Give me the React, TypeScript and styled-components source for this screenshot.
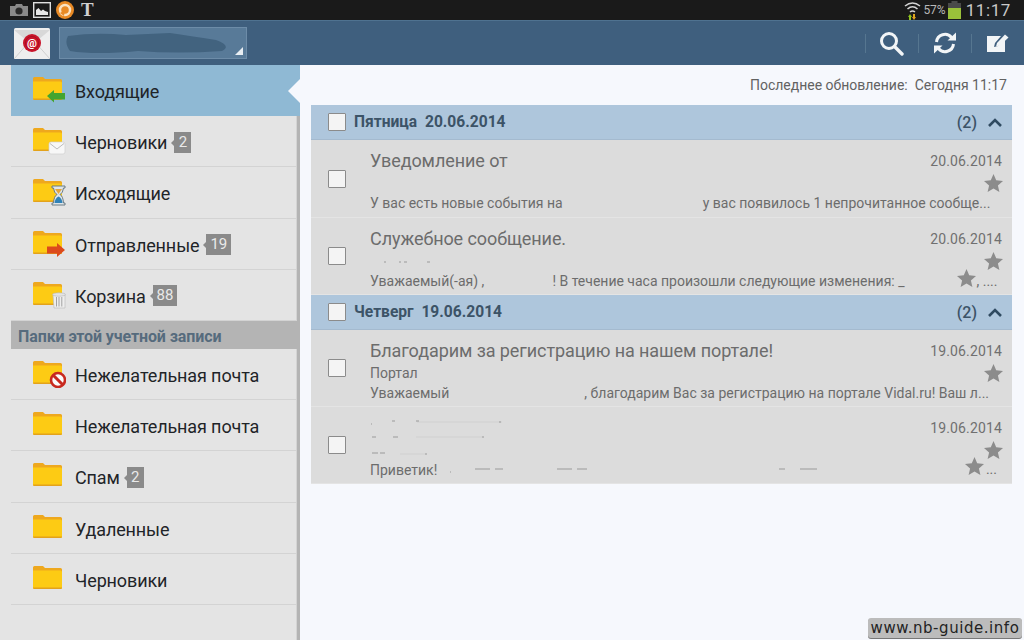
import React from 'react'
import styled, { createGlobalStyle } from 'styled-components'

const GlobalStyle = createGlobalStyle`
  html, body { margin: 0; padding: 0; background: #f6f8fd; }
  * { box-sizing: border-box; }
`

const Page = styled.div`
  width: 1024px;
  height: 640px;
  display: flex;
  flex-direction: column;
  position: relative;
  overflow: hidden;
  font-family: Roboto, "Liberation Sans", sans-serif;
  background: #f6f8fd;
`

/* status bar */
const StatusBar = styled.div`
  height: 20px;
  background: #1a1a1a;
  display: flex;
  align-items: center;
  padding: 0 13px 0 10px;
`
const StatusLeft = styled.div`
  display: flex;
  align-items: center;
  gap: 5px;
  flex: 1;
`
const TimesGlyph = styled.span`
  font-family: "Liberation Serif", serif;
  font-weight: bold;
  font-size: 19px;
  line-height: 18px;
  color: #d0d0d0;
  margin-left: 2px;
`
const Percent = styled.span`
  font-size: 12px;
  color: #b8b8b8;
  margin: 0 2px 0 2px;
`
const Clock = styled.span`
  font-size: 17px;
  letter-spacing: 0.6px;
  color: #c9c9c9;
  margin-left: 5px;
`

/* action bar */
const ActionBar = styled.div`
  height: 45px;
  background: #3f5f7e;
  border-top: 1px solid #4f7290;
  display: flex;
  align-items: center;
  padding-left: 14px;
`
const AppIcon = styled.div`
  width: 36px;
  height: 31px;
  flex: none;
`
const AccountPicker = styled.div`
  width: 188px;
  height: 32px;
  margin-left: 9px;
  background: #587a98;
  border: 1px solid #6d8ca8;
  display: flex;
  align-items: center;
  position: relative;
  overflow: hidden;
`
const PickerCorner = styled.div`
  position: absolute;
  right: 3px;
  bottom: 3px;
  width: 0;
  height: 0;
  border-left: 8px solid transparent;
  border-bottom: 8px solid #e8eef3;
`
const ActionGroup = styled.div`
  margin-left: auto;
  display: flex;
  height: 100%;
`
const ActionButton = styled.div`
  width: 53px;
  display: flex;
  align-items: center;
  justify-content: center;
  position: relative;
  &::before {
    content: '';
    position: absolute;
    left: 0;
    top: 13px;
    bottom: 12px;
    width: 1px;
    background: #567690;
  }
`

/* main */
const Main = styled.div`
  flex: 1;
  display: flex;
  min-height: 0;
`
const Sidebar = styled.div`
  width: 300px;
  flex: none;
  padding-left: 11px;
  background: #e4e4e4;
  border-right: 3px solid #b4b4b4;
  box-shadow: inset -1px 0 0 #d4d4d4;
`
const FolderRow = styled.div<{ $active?: boolean }>`
  height: 51.2px;
  display: flex;
  align-items: center;
  padding: 3px 0 0 22px;
  position: relative;
  margin-right: ${p => (p.$active ? '-3px' : '0')};
  background: ${p => (p.$active ? '#8fb9d4' : 'transparent')};
  border-bottom: 1px solid ${p => (p.$active ? '#8fb9d4' : '#d3d3d3')};
  ${p =>
    p.$active &&
    `&::after {
      content: '';
      position: absolute;
      right: 0;
      top: 14px;
      border-top: 12px solid transparent;
      border-bottom: 12px solid transparent;
      border-right: 12px solid #f6f8fd;
    }`}
`
const IconSlot = styled.span`
  display: flex;
  margin-top: -3px;
`
const FolderLabel = styled.span`
  font-size: 18px;
  letter-spacing: -0.12px;
  color: #1f2428;
  margin-left: 9px;
`
const CountBadge = styled.span`
  min-width: 17px;
  height: 21px;
  padding: 0 4px;
  margin-left: 7px;
  background: #8a8a8a;
  color: #e9e9e9;
  font-size: 15px;
  line-height: 21px;
  text-align: center;
  position: relative;
  margin-top: -1px;
  &::before {
    content: '';
    position: absolute;
    left: -3px;
    top: 8px;
    border-top: 3px solid transparent;
    border-bottom: 3px solid transparent;
    border-right: 3px solid #8a8a8a;
  }
`
const SectionHeader = styled.div`
  height: 28px;
  background: #b4b4b4;
  margin-right: -3px;
  padding: 3px 0 0 7px;
  display: flex;
  align-items: center;
  font-size: 16px;
  letter-spacing: -0.1px;
  font-weight: bold;
  color: #566b7d;
`

/* content */
const Content = styled.div`
  flex: 1;
  padding: 0 12px 0 11px;
`
const UpdatedLine = styled.div`
  height: 40px;
  padding-right: 5px;
  display: flex;
  align-items: center;
  justify-content: flex-end;
  font-size: 14px;
  color: #626262;
  white-space: pre;
`
const GroupHeader = styled.div`
  height: 35px;
  background: #aec6dc;
  display: flex;
  align-items: center;
  padding: 0 10px 0 17px;
  color: #3c5367;
  border-bottom: 1px solid #a4bacf;
`
const GroupTitle = styled.span`
  font-size: 15.6px;
  font-weight: bold;
  margin-left: 8px;
  flex: 1;
  white-space: pre;
`
const GroupCount = styled.span`
  font-size: 16px;
  font-weight: 500;
  margin-right: 11px;
`
const CheckBox = styled.div`
  width: 18px;
  height: 18px;
  flex: none;
  background: #f4f4f4;
  border: 1px solid #8b8b8b;
  border-radius: 1px;
`
const MessageRow = styled.div<{ $height: number }>`
  height: ${p => p.$height}px;
  background: #dcdcdc;
  border-bottom: 1px solid #e4e4e4;
  display: flex;
  align-items: center;
  padding-left: 17px;
`
const MessageBody = styled.div`
  flex: 1;
  margin-left: 24px;
  height: 100%;
  padding: 8px 10px 0 0;
  display: flex;
  flex-direction: column;
  min-width: 0;
`
const TopLine = styled.div`
  height: 26px;
  display: flex;
  align-items: center;
  justify-content: space-between;
`
const Subject = styled.span`
  font-size: 18px;
  letter-spacing: -0.08px;
  color: #6c6c6c;
  margin-bottom: 2px;
`
const DateText = styled.span`
  font-size: 14px;
  letter-spacing: 0.15px;
  color: #707070;
`
const MiddleLine = styled.div`
  height: 18px;
  display: flex;
  align-items: center;
  justify-content: space-between;
`
const StarSlot = styled.span`
  margin-right: -1px;
`
const Sender = styled.span`
  font-size: 14px;
  color: #6c6c6c;
`
const PreviewLine = styled.div`
  height: 22px;
  display: flex;
  align-items: center;
  position: relative;
  font-size: 14px;
  color: #6c6c6c;
  white-space: pre;
`
const Gap = styled.span<{ $width: number }>`
  display: inline-block;
  width: ${p => p.$width}px;
  flex: none;
`
const OverStar = styled.div<{ $right: number; $top: number }>`
  position: absolute;
  right: ${p => p.$right}px;
  top: ${p => p.$top}px;
`
const TrailingDots = styled.span`
  position: absolute;
  right: 5px;
  top: 2px;
`
const SpeckColumn = styled.div`
  align-self: flex-start;
  margin-top: 4px;
  display: flex;
  flex-direction: column;
  gap: 9px;
`
const SpeckLow = styled.div`
  margin-top: 6px;
`
const Watermark = styled.div`
  position: absolute;
  right: 2px;
  bottom: 2px;
  width: 154px;
  height: 20px;
  background: #bcbcbc;
  border-radius: 3px;
  box-shadow: 0 1px 0 #777;
  display: flex;
  align-items: center;
  justify-content: center;
  font-family: "DejaVu Sans", sans-serif;
  font-size: 15px;
  letter-spacing: 0.55px;
  color: #232323;
`

/* drawings */
type Badge = 'in' | 'mail' | 'wait' | 'sent' | 'trash' | 'block'

const FolderIcon = ({ badge }: { badge?: Badge }) => (
  <svg width="33" height="28" viewBox="0 0 33 28">
    <path d="M0 2.5Q0 1 1.5 1H10L12 3H27.5Q29 3 29 4.5V7H0Z" fill="#eea81e" />
    <path d="M0 5.5H27.5Q29 5.5 29 7V22.5Q29 24 27.5 24H1.5Q0 24 0 22.5Z" fill="#fdcb14" />
    <path d="M0 22.5H29V22.8Q29 24 27.5 24H1.5Q0 24 0 22.8Z" fill="#e3a21b" />
    {badge === 'in' && <path d="M14 20L21 14V17H32V23.5H21V26.5Z" fill="#43a52f" />}
    {badge === 'mail' && (
      <g>
        <rect x="16" y="15" width="16" height="12" rx="2" fill="#f7f7f7" stroke="#d0d0d0" strokeWidth="0.7" />
        <path d="M17 16.5L24 22L31 16.5" fill="none" stroke="#bcbcbc" strokeWidth="1" />
      </g>
    )}
    {badge === 'wait' && (
      <g>
        <path d="M19 8H32V10H30.5Q30 15 27 16.5Q30 18 30.5 25H32V27H19V25H20.5Q21 18 24 16.5Q21 15 20.5 10H19Z" fill="#dfe5e8" stroke="#5f6f7a" strokeWidth="0.9" />
        <path d="M22 11H29L25.5 16Z" fill="#e3a63e" />
        <path d="M21.5 25Q22 20 25.5 18.5Q29 20 29.5 25Z" fill="#2f82b8" />
      </g>
    )}
    {badge === 'sent' && <path d="M14 16.5H24V13L32 20L24 27V23.5H14Z" fill="#dc4a1c" />}
    {badge === 'trash' && (
      <g>
        <path d="M20 14H32V27H21Z" fill="#eeeeee" stroke="#bdbdbd" strokeWidth="0.7" />
        <path d="M23.5 16V25.5M26 16V25.5M28.8 16V25.5" stroke="#a2a2a2" strokeWidth="1" />
        <ellipse cx="26" cy="13.5" rx="6.5" ry="1.7" fill="#e4e4e4" stroke="#b5b5b5" strokeWidth="0.6" />
      </g>
    )}
    {badge === 'block' && (
      <g>
        <circle cx="25" cy="20" r="7" fill="#fbfbfb" stroke="#c8291f" strokeWidth="2.6" />
        <path d="M20 15L30 25" stroke="#c8291f" strokeWidth="3" />
      </g>
    )}
  </svg>
)

const Star = () => (
  <svg width="19" height="18" viewBox="0 0 19 18" style={{ display: 'block' }}>
    <path d="M9.5 0L12.2 6.2L19 6.9L13.9 11.4L15.4 18L9.5 14.6L3.6 18L5.1 11.4L0 6.9L6.8 6.2Z" fill="#8c8c8c" />
  </svg>
)

const Chevron = () => (
  <svg width="14" height="9" viewBox="0 0 14 9">
    <path d="M1 8L7 2L13 8" fill="none" stroke="#2f4a60" strokeWidth="2.6" />
  </svg>
)

// leftovers of the blurred-out text in the screenshot
const Specks = ({ width, d, faint }: { width: number; d: string; faint?: string }) => (
  <svg width={width} height="6" viewBox={`0 0 ${width} 6`} style={{ display: 'block' }}>
    {faint && <path d={faint} fill="none" stroke="#d0d0d0" strokeWidth="1" />}
    <path d={d} fill="none" stroke="#9a9a9a" strokeWidth="1" />
  </svg>
)

const MailAppIcon = () => (
  <AppIcon>
    <svg width="36" height="31" viewBox="0 0 36 31">
      <rect width="36" height="31" rx="1.5" fill="#eeeeee" />
      <path d="M0 2L18 17L36 2" fill="#d8d8d8" />
      <path d="M0 31L15 14M36 31L21 14" stroke="#cfcfcf" strokeWidth="1" />
      <circle cx="18" cy="15" r="9" fill="#c8142a" />
      <circle cx="18" cy="15" r="6.6" fill="none" stroke="#a40d20" strokeWidth="0.8" />
      <text x="18" y="19" textAnchor="middle" fontSize="11" fontWeight="bold" fill="#ffffff" fontFamily="Roboto, sans-serif">@</text>
    </svg>
  </AppIcon>
)

const folders: { name: string; badge?: Badge; count?: number; active?: boolean }[] = [
  { name: 'Входящие', badge: 'in', active: true },
  { name: 'Черновики', badge: 'mail', count: 2 },
  { name: 'Исходящие', badge: 'wait' },
  { name: 'Отправленные', badge: 'sent', count: 19 },
  { name: 'Корзина', badge: 'trash', count: 88 },
]
const accountFolders: { name: string; badge?: Badge; count?: number }[] = [
  { name: 'Нежелательная почта', badge: 'block' },
  { name: 'Нежелательная почта' },
  { name: 'Спам', count: 2 },
  { name: 'Удаленные' },
  { name: 'Черновики' },
]

const Folder = ({ name, badge, count, active }: { name: string; badge?: Badge; count?: number; active?: boolean }) => (
  <FolderRow $active={active}>
    <IconSlot>
      <FolderIcon badge={badge} />
    </IconSlot>
    <FolderLabel>{name}</FolderLabel>
    {count !== undefined && <CountBadge>{count}</CountBadge>}
  </FolderRow>
)

const App = () => {
  return (
    <Page>
      <GlobalStyle />
      <StatusBar>
        <StatusLeft>
          <svg width="18" height="12" viewBox="0 0 18 12">
            <path d="M0 2H5L6 0H12L13 2H18V12H0Z" fill="#8a8a8a" />
            <circle cx="9" cy="7" r="3.6" fill="#2a2a2a" />
          </svg>
          <svg width="18" height="16" viewBox="0 0 18 16">
            <rect x="0.7" y="0.7" width="16.6" height="14.6" fill="#1a1a1a" stroke="#e0e0e0" strokeWidth="1.4" />
            <path d="M3 13V8L5.5 6L8 9L10 7.5L12 9L15 10V13Z" fill="#e8e8e8" />
          </svg>
          <svg width="18" height="18" viewBox="0 0 18 18">
            <circle cx="9" cy="9" r="9" fill="#e98a25" />
            <circle cx="9" cy="9" r="5" fill="none" stroke="#fbe3c3" strokeWidth="2.4" />
            <path d="M4 12L9 9L8 15Z" fill="#e98a25" />
          </svg>
          <TimesGlyph>T</TimesGlyph>
        </StatusLeft>
        <svg width="17" height="19" viewBox="0 0 17 19">
          <path d="M1 5Q8.5 -1 16 5M3.5 8Q8.5 3.5 13.5 8M6 11Q8.5 9 11 11" fill="none" stroke="#d4d4d4" strokeWidth="1.6" />
          <path d="M6 13L8 16H7V19H5V16H4Z" fill="#8fc31f" />
          <path d="M10 19L12 16H11V13H9V16H8Z" fill="#e1a41e" />
        </svg>
        <Percent>57%</Percent>
        <svg width="13" height="18" viewBox="0 0 13 18">
          <rect x="3.5" y="0" width="6" height="2" fill="#4a4a4a" />
          <rect x="0" y="2" width="13" height="6" fill="#4a4a4a" />
          <rect x="0" y="7" width="13" height="11" fill="#9ac13a" />
        </svg>
        <Clock>11:17</Clock>
      </StatusBar>

      <ActionBar>
        <MailAppIcon />
        <AccountPicker>
          <svg width="166" height="24" viewBox="0 0 166 24" style={{ marginLeft: 6 }}>
            <path d="M2 5Q30 1 60 4L104 2Q124 5 150 9Q166 15 156 20Q112 23 72 20Q30 24 4 20Q-2 12 2 5Z" fill="#42637f" />
          </svg>
          <PickerCorner />
        </AccountPicker>
        <ActionGroup>
          <ActionButton>
            <svg width="25" height="25" viewBox="0 0 25 25">
              <circle cx="10" cy="10" r="7.5" fill="none" stroke="#f2f5f7" strokeWidth="3" />
              <path d="M15.5 15.5L23 23" stroke="#f2f5f7" strokeWidth="3.4" strokeLinecap="round" />
            </svg>
          </ActionButton>
          <ActionButton>
            <svg width="24" height="22" viewBox="0 0 24 22">
              <path d="M3.5 10A8.5 8.5 0 0 1 18.5 5.5" fill="none" stroke="#f2f5f7" strokeWidth="3" />
              <path d="M14.5 8.5H23V0.5Z" fill="#f2f5f7" />
              <path d="M20.5 12A8.5 8.5 0 0 1 5.5 16.5" fill="none" stroke="#f2f5f7" strokeWidth="3" />
              <path d="M9.5 13.5H1V21.5Z" fill="#f2f5f7" />
            </svg>
          </ActionButton>
          <ActionButton>
            <svg width="22" height="18" viewBox="0 0 22 18">
              <path d="M0 2H14L8 9L7 13L11 12L18 5V18H0Z" fill="#f2f5f7" />
              <path d="M10 9L18 0.5L21.5 3.5L13 11.5L9 12.5Z" fill="#f2f5f7" />
            </svg>
          </ActionButton>
        </ActionGroup>
      </ActionBar>

      <Main>
        <Sidebar>
          {folders.map(f => (
            <Folder key={f.name} {...f} />
          ))}
          <SectionHeader>Папки этой учетной записи</SectionHeader>
          {accountFolders.map((f, i) => (
            <Folder key={i} {...f} />
          ))}
        </Sidebar>

        <Content>
          <UpdatedLine>Последнее обновление:  Сегодня 11:17</UpdatedLine>

          <GroupHeader>
            <CheckBox />
            <GroupTitle>Пятница  20.06.2014</GroupTitle>
            <GroupCount>(2)</GroupCount>
            <Chevron />
          </GroupHeader>
          <MessageRow $height={78}>
            <CheckBox />
            <MessageBody>
              <TopLine>
                <Subject>Уведомление от</Subject>
                <DateText>20.06.2014</DateText>
              </TopLine>
              <MiddleLine>
                <span />
                <StarSlot>
                  <Star />
                </StarSlot>
              </MiddleLine>
              <PreviewLine>
                У вас есть новые события на<Gap $width={140} />у вас появилось 1 непрочитанное сообще...
              </PreviewLine>
            </MessageBody>
          </MessageRow>
          <MessageRow $height={77}>
            <CheckBox />
            <MessageBody>
              <TopLine>
                <Subject>Служебное сообщение.</Subject>
                <DateText>20.06.2014</DateText>
              </TopLine>
              <MiddleLine>
                <Specks width={60} d="M14 4H16M29 4H31M34 4H37M57 4H60" />
                <StarSlot>
                  <Star />
                </StarSlot>
              </MiddleLine>
              <PreviewLine>
                Уважаемый(-ая) ,<Gap $width={68} />! В течение часа произошли следующие изменения: _<Gap $width={72} />, ....
                <OverStar $right={26} $top={-1}>
                  <Star />
                </OverStar>
              </PreviewLine>
            </MessageBody>
          </MessageRow>

          <GroupHeader>
            <CheckBox />
            <GroupTitle>Четверг  19.06.2014</GroupTitle>
            <GroupCount>(2)</GroupCount>
            <Chevron />
          </GroupHeader>
          <MessageRow $height={77}>
            <CheckBox />
            <MessageBody>
              <TopLine>
                <Subject>Благодарим за регистрацию на нашем портале!</Subject>
                <DateText>19.06.2014</DateText>
              </TopLine>
              <MiddleLine>
                <Sender>Портал</Sender>
                <StarSlot>
                  <Star />
                </StarSlot>
              </MiddleLine>
              <PreviewLine>
                Уважаемый<Gap $width={135} />, благодарим Вас за регистрацию на портале Vidal.ru! Ваш л...
              </PreviewLine>
            </MessageBody>
          </MessageRow>
          <MessageRow $height={77}>
            <CheckBox />
            <MessageBody>
              <TopLine>
                <SpeckColumn>
                  <Specks width={132} d="M1 5H2M22 2H25M46 2H49M129 3H131" faint="M47 3H132" />
                  <Specks width={114} d="M2 3H6M23 3H28M112 3H114" faint="M46 3H112" />
                </SpeckColumn>
                <DateText>19.06.2014</DateText>
              </TopLine>
              <MiddleLine>
                <SpeckLow>
                  <Specks width={58} d="M2 3H8M10 3H15M55 4H57" faint="M30 4H55" />
                </SpeckLow>
                <StarSlot>
                  <Star />
                </StarSlot>
              </MiddleLine>
              <PreviewLine>
                Приветик!
                <Gap $width={10} />
                <Specks width={400} d="M3 5H4M28 2H43M48 2H56M110 2H125M130 2H140M332 2H338M353 2H370" />
                <OverStar $right={18} $top={-2}>
                  <Star />
                </OverStar>
                <TrailingDots>...</TrailingDots>
              </PreviewLine>
            </MessageBody>
          </MessageRow>
        </Content>
      </Main>

      <Watermark>www.nb-guide.info</Watermark>
    </Page>
  )
}

export default App
